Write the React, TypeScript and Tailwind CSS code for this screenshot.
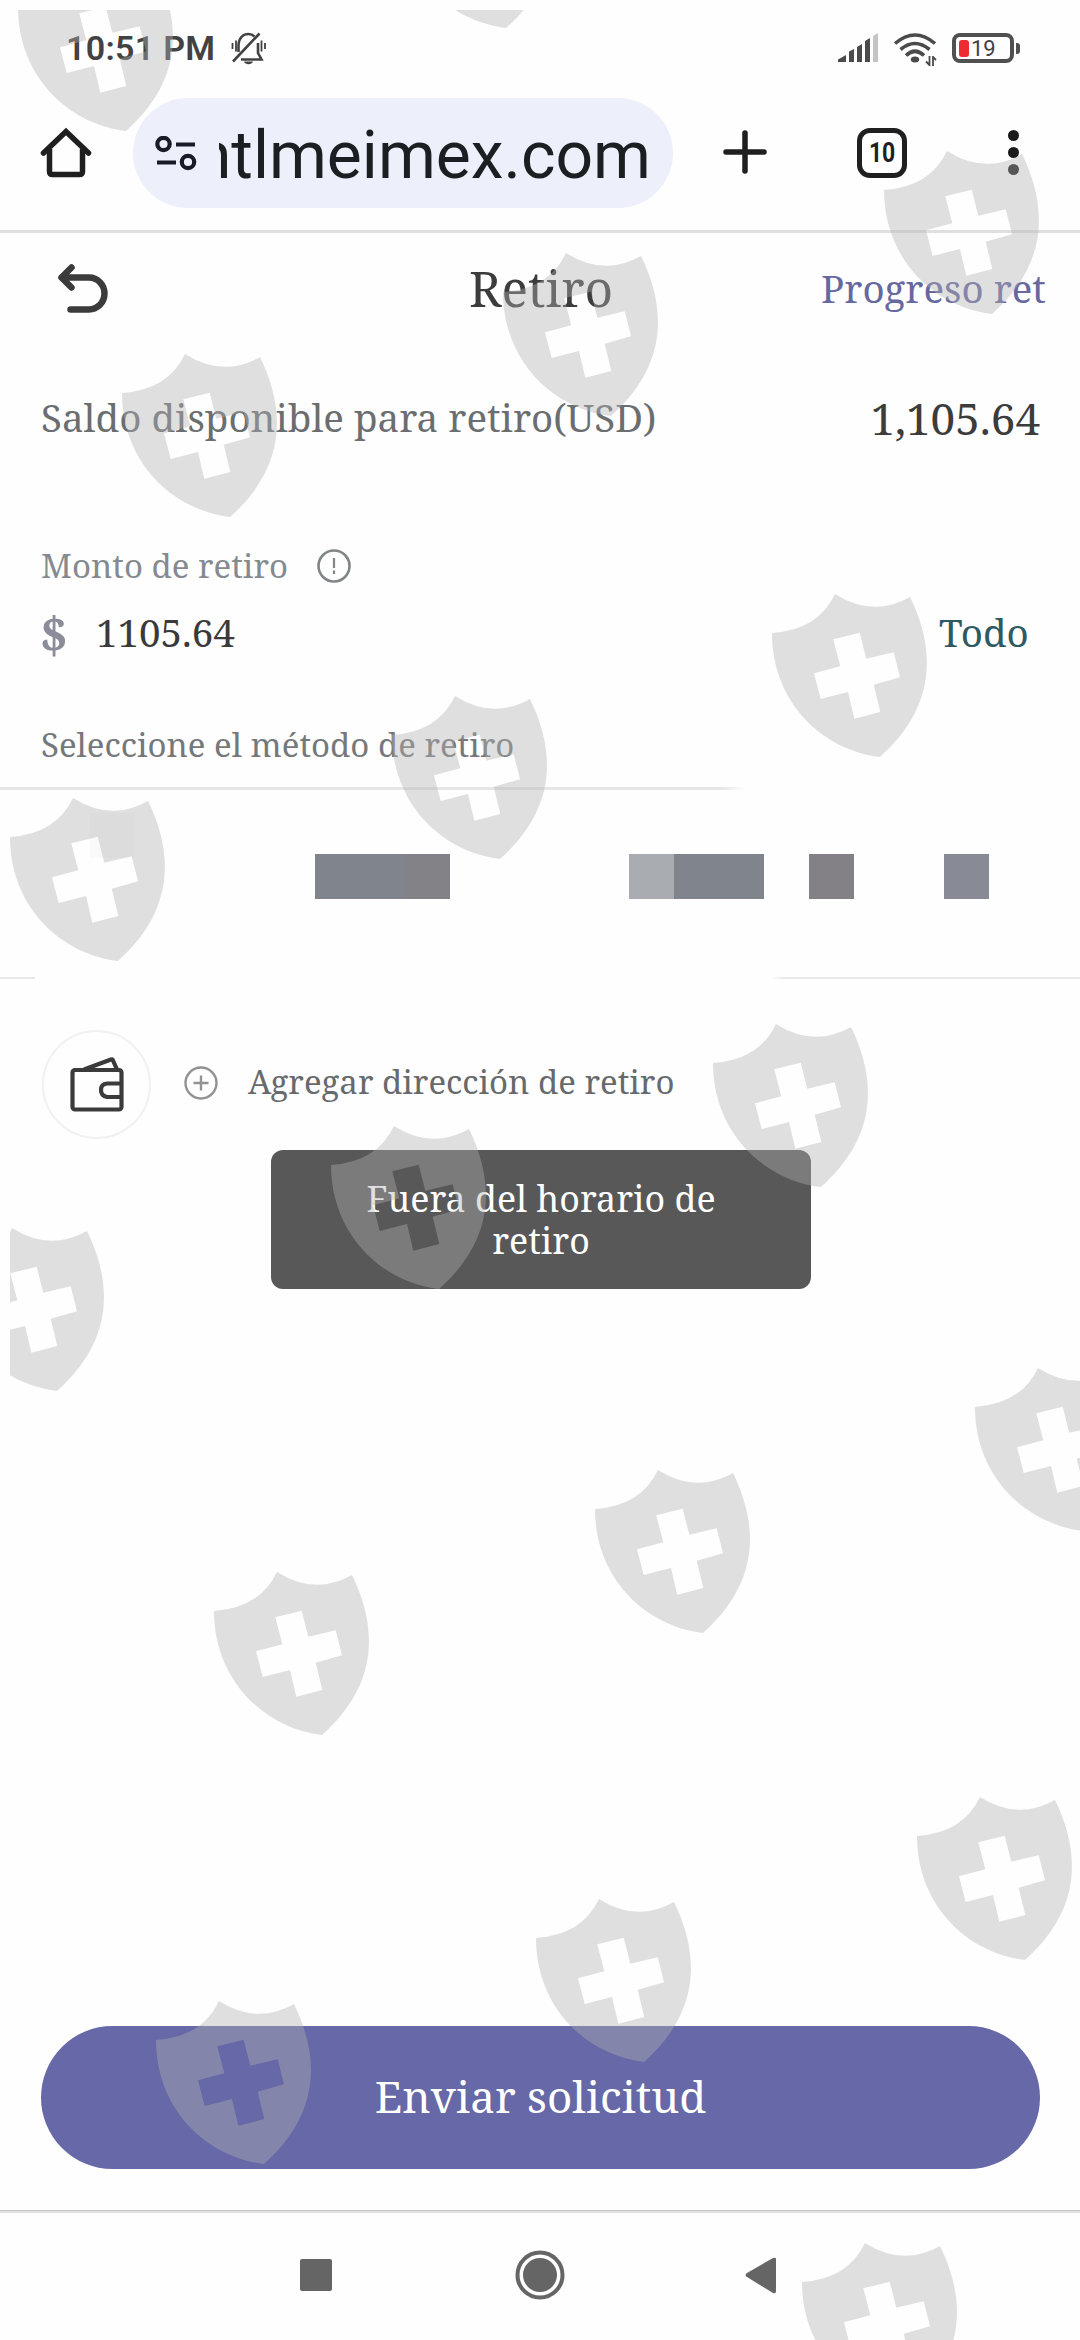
import type { ReactNode } from 'react';

const SERIF = "font-['Noto_Serif','Droid_Serif','DejaVu_Serif_Condensed','DejaVu_Serif',serif]";

/** Top-left corner of every shield in the overlay. */
const SHIELDS: [number, number][] = [
  [18, -32],
  [398, -135],
  [884, 151],
  [503, 253],
  [122, 354],
  [772, 594],
  [392, 696],
  [10, 798],
  [713, 1024],
  [331, 1126],
  [-51, 1228],
  [975, 1368],
  [595, 1470],
  [214, 1572],
  [917, 1797],
  [536, 1899],
  [156, 2001],
  [802, 2243],
];

/** Pixelated strip: x offset comes from the gaps, so each block keeps its own margin. */
const BLOCKS = [
  'ml-[315px] w-[90px] bg-[#80848d]',
  'w-[45px] bg-[#838286]',
  'ml-[179px] w-[45px] bg-[#a9adb1]',
  'w-[90px] bg-[#80848d]',
  'ml-[45px] w-[45px] bg-[#838185]',
  'ml-[90px] w-[45px] bg-[#888b95]',
];

function ShieldOverlay() {
  return (
    <svg
      aria-hidden
      className="pointer-events-none absolute inset-0 h-[2340px] w-[1080px]"
      viewBox="0 0 1080 2340"
    >
      <defs>
        <clipPath id="frame">
          <rect x="10" y="10" width="1070" height="2330" />
        </clipPath>
        <path
          id="shield"
          fillRule="evenodd"
          d="M0 39Q46 36 63 0Q101 24 138 3C160 48 170 108 108 163C50 156 0 108 0 39ZM61.3 45.3L87.7 38.7L94.3 64.7L121.7 58.3L128 83.3L101.7 90.7L108.3 118L82.3 124.7L76 98L48.7 105L42 79.3L68.3 72.3Z"
        />
      </defs>
      <g clipPath="url(#frame)" fill="#b2b2b2" fillOpacity="0.4">
        {SHIELDS.map(([x, y]) => (
          <use key={`${x}-${y}`} href="#shield" x={x} y={y} />
        ))}
      </g>
    </svg>
  );
}

function StatusBar() {
  return (
    <div className="flex h-[98px] items-start pt-[28px] pl-[66px] font-[Roboto,sans-serif] text-[#424242]">
      <span className="w-[165px] text-[34px] leading-[40px] font-semibold tracking-[0.3px] whitespace-nowrap">
        10:51 PM
      </span>
      <svg className="mt-[3px] h-[36px] w-[36px]" viewBox="0 0 36 36" fill="none" stroke="#424242" strokeWidth="2.6">
        <path d="M7.500 21V14C8 7 12 3 17.500 3C20 3 22 4 23.500 5.500M27 12V22L30.500 28.500H10" />
        <path d="M28.500 2.500L2 30.500" />
        <path d="M1.500 12V18M5 9.500V20.500M30.500 9.500V20.500M34 12V18" strokeWidth="1.8" />
        <path d="M13 30.500H22C21 34 14 34 13 30.500Z" fill="#424242" stroke="none" />
      </svg>
      <svg className="mt-[5px] ml-[571px] h-[32px] w-[42px]" viewBox="0 0 42 32" fill="#4a4a4a">
        <path d="M0 29V26.500L8 22V29ZM11 29V18.500L16 16V29ZM19 29V14L24 11V29ZM27 29V8L32 5V29Z" />
        <path d="M35 29V3L40 0V29Z" fill="#c4c4c4" />
      </svg>
      <svg className="mt-[5px] ml-[13px] h-[36px] w-[44px]" viewBox="0 0 44 36" fill="none" stroke="#4a4a4a" strokeWidth="3.600">
        <path d="M2 10.500Q22 -6.500 42 10.500" />
        <path d="M7.500 16.500Q22 4.500 36.500 16.500" />
        <path d="M13 22.500Q22 14 31 22.500" />
        <ellipse cx="22" cy="26.500" rx="4.200" ry="2.900" fill="#4a4a4a" stroke="none" />
        <path d="M36.500 23V33M40 23V33M33 28.500L36 31.500M43 27L40.500 24.500" strokeWidth="1.8" />
      </svg>
      <div className="mt-[5px] ml-[15px] flex h-[30px] w-[62px] items-center rounded-[8px] border-4 border-[#505050] pl-[3px]">
        <span className="h-[17px] w-[10px] rounded-[3px] bg-[#ef2b32]" />
        <span className="mt-[2px] ml-[2px] text-[22px] leading-[22px]">19</span>
      </div>
      <span className="mt-[15px] ml-[2px] h-[11px] w-[4px] rounded-r-[3px] bg-[#505050]" />
    </div>
  );
}

function BrowserBar() {
  return (
    <div className="flex h-[135px] items-start border-b-[3px] border-[#e0e0e0] pl-[40px] font-[Roboto,sans-serif]">
      <svg className="mt-[28px] h-[54px] w-[52px]" viewBox="0 0 52 54" fill="none" stroke="#1f1f1f" strokeWidth="5.500">
        <path d="M3.500 27L26 5.500L48.500 27" strokeLinecap="round" />
        <path d="M9.500 23V45.500Q9.500 48.500 12.500 48.500H39.500Q42.500 48.500 42.500 45.500V23" />
      </svg>
      <div className="ml-[41px] flex h-[110px] w-[540px] items-start rounded-full bg-[#edf0fa] pl-[22px]">
        <svg className="mt-[38px] h-[36px] w-[44px]" viewBox="0 0 44 36" fill="none" stroke="#171c28" strokeWidth="4.200">
          <circle cx="8.500" cy="8" r="6.200" />
          <circle cx="33" cy="26" r="6.200" />
          <path d="M21 8.500H40M2 26.500H21" />
        </svg>
        <div className="mt-[18px] ml-[20px] flex h-[80px] w-[432px] justify-end overflow-hidden text-[66px] leading-[80px] whitespace-nowrap text-[#1a1f22]">
          ntlmeimex.com
        </div>
      </div>
      <svg className="mt-[32px] ml-[50px] h-[44px] w-[44px]" viewBox="0 0 44 44" stroke="#1f1f1f" strokeWidth="5.500" strokeLinecap="round">
        <path d="M22 3V41M3 22H41" />
      </svg>
      <div className="mt-[30px] ml-[90px] flex h-[50px] w-[50px] items-center justify-center rounded-[13px] border-[5.500px] border-[#1f1f1f] text-[28px] font-bold text-[#1f1f1f]">
        <span className="scale-x-[0.82]">10</span>
      </div>
      <div className="mt-[32px] ml-[101px] flex flex-col gap-[6px]">
        <span className="h-[11px] w-[11px] rounded-full bg-[#1a1a1a]" />
        <span className="h-[11px] w-[11px] rounded-full bg-[#1a1a1a]" />
        <span className="h-[11px] w-[11px] rounded-full bg-[#1a1a1a]" />
      </div>
    </div>
  );
}

function Row({ className, children }: { className: string; children: ReactNode }) {
  return <div className={`flex items-center whitespace-nowrap ${className}`}>{children}</div>;
}

function PageHeader() {
  return (
    <Row className="h-[113px] pl-[56px]">
      <svg className="h-[54px] w-[54px]" viewBox="0 0 54 54" fill="none" stroke="#3b3b3b" strokeWidth="6.500" strokeLinecap="round">
        <path d="M15.500 4.500L5.500 14.500L15.500 24.500" strokeLinejoin="round" />
        <path d="M6 14.500H33A15.500 16 0 0 1 33 46.500H14.500" />
      </svg>
      <h1 className="mb-[2px] ml-[359px] w-[352px] text-[49.5px] text-[#3c3c3c]">Retiro</h1>
      <span className="mb-[2px] text-[38.5px] text-[#6768a0]">Progreso ret</span>
    </Row>
  );
}

function NavBar() {
  return (
    <div className="flex h-[130px] items-start border-t border-[#c4c4c4]">
      <div className="h-[2px] w-full bg-[#e0e0e0]">
        <svg className="h-[128px] w-[1080px]" viewBox="0 0 1080 128" fill="#656565">
          <rect x="300" y="48" width="32" height="32" rx="2" />
          <circle cx="540" cy="64" r="22.500" fill="none" stroke="#656565" strokeWidth="4" />
          <circle cx="540" cy="64" r="17" />
          <path d="M747 62L773 47Q776 46 776 48V80Q776 83 773 82L747 66Q744 64 747 62Z" />
        </svg>
      </div>
    </div>
  );
}

export default function App() {
  return (
    <div className={`relative flex h-[2340px] w-[1080px] flex-col overflow-hidden bg-[#fefefe] ${SERIF}`}>
      <StatusBar />
      <BrowserBar />
      <PageHeader />

      <Row className="h-[144px] justify-between pr-[40px] pl-[41px]">
        <span className="text-[38.5px] text-[#6b6e70]">Saldo disponible para retiro(USD)</span>
        <span className="text-[44px] text-[#3c3c3c]">1,105.64</span>
      </Row>

      <Row className="mt-[46px] h-[60px] pl-[41px] text-[#848a8f]">
        <span className="w-[275px] text-[33px]">Monto de retiro</span>
        <svg className="h-[36px] w-[36px]" viewBox="0 0 36 36" fill="none" stroke="#808588" strokeWidth="2.600">
          <circle cx="18" cy="18" r="15.500" />
          <path d="M18 10V20M18 22.500V26" strokeWidth="2.200" />
        </svg>
      </Row>
      <Row className="h-[74px] pb-[1px] pl-[40px] text-[38.5px]">
        <span className="w-[56px] text-[49px] leading-[50px] font-bold text-[#8a8c9a]">$</span>
        <span className="w-[843px] text-[#3a3a3a]">1105.64</span>
        <span className="text-[#2f5a62]">Todo</span>
      </Row>
      <Row className="mt-[38px] h-[79px] pb-[5px] pl-[41px] text-[33px] text-[#75787b]">
        Seleccione el método de retiro
      </Row>

      <div className="h-[3px] w-[744px] bg-linear-to-r from-[#e6e6e6] from-97% to-[#fefefe]" />
      <div className="flex h-[187px] items-start pt-[64px]">
        {BLOCKS.map((block) => (
          <span key={block} className={`h-[45px] flex-none ${block}`} />
        ))}
      </div>
      <div className="flex h-[2px] justify-between">
        <span className="w-[35px] bg-[#e8e8e8]" />
        <span className="w-[308px] bg-linear-to-l from-[#e8e8e8] from-96% to-[#fefefe]" />
      </div>

      <Row className="mt-[51px] h-[108px] pl-[42px]">
        <div className="flex h-[109px] w-[109px] items-center justify-center rounded-full border-2 border-[#f1f1f1]">
          <svg className="h-[58px] w-[56px]" viewBox="0 0 56 58" fill="none" stroke="#3b3b3b" strokeWidth="4.200" strokeLinejoin="round">
            <rect x="3.500" y="15" width="49" height="39.500" rx="2.500" />
            <path d="M15 14.500L42 4.500Q43.500 4 44 5.500L48 14.500" />
            <path d="M52 28.500H38Q32 29 32 35Q32 41 38 42H52" />
          </svg>
        </div>
        <svg className="ml-[32px] h-[36px] w-[36px]" viewBox="0 0 36 36" fill="none" stroke="#929292" strokeWidth="2.400">
          <circle cx="18" cy="17" r="15.500" />
          <path d="M18 9.500V24.500M10.500 17H25.500" />
        </svg>
        <span className="mb-[4px] ml-[29px] text-[33px] text-[#666a6c]">Agregar dirección de retiro</span>
      </Row>

      <div className="mt-[12px] ml-[271px] flex h-[139px] w-[540px] flex-col items-center rounded-[12px] bg-[#585858] pt-[27px] text-[35.8px] leading-[42px] text-white">
        <span>Fuera del horario de</span>
        <span>retiro</span>
      </div>

      <button className="mt-auto mb-[41px] ml-[41px] flex h-[143px] w-[999px] items-center justify-center rounded-full bg-[#6668a7] pb-[4px] text-[44px] text-white">
        Enviar solicitud
      </button>
      <NavBar />

      {/* stray block left from the pixelation, under the shields */}
      <span className="absolute top-[813px] left-[90px] h-[45px] w-[45px] bg-black/[0.02]" />
      <ShieldOverlay />
    </div>
  );
}
